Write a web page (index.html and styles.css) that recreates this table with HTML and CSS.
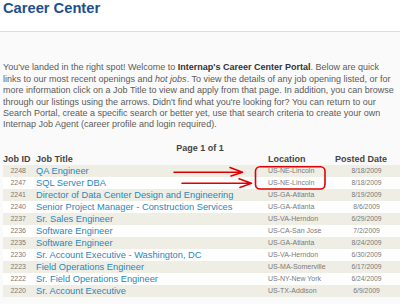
FILE: index.html
```html
<!DOCTYPE html>
<html lang="en">
<head>
<meta charset="utf-8">
<title>Career Center</title>
<link rel="stylesheet" href="styles.css">
</head>
<body>
<div class="page">
  <header class="top">
    <h1 class="title">Career Center</h1>
  </header>
  <main class="content">
    <p class="intro">You've landed in the right spot! Welcome to <b>Internap's Career Center Portal</b>. Below are quick<br>links to our most recent openings and <i>hot jobs</i>. To view the details of any job opening listed, or for<br>more information click on a Job Title to view and apply from that page. In addition, you can browse<br>through our listings using the arrows. Didn't find what you're looking for? You can return to our<br>Search Portal, create a specific search or better yet, use that search criteria to create your own<br>Internap Job Agent (career profile and login required).</p>
    <div class="pager">Page 1 of 1</div>
    <div class="jobs">
      <div class="row head"><span class="id">Job ID</span><span class="job">Job Title</span><span class="loc">Location</span><span class="date">Posted Date</span></div>
      <div class="row"><span class="id">2248</span><span class="job">QA Engineer</span><span class="loc">US-NE-Lincoln</span><span class="date">8/18/2009</span></div>
      <div class="row"><span class="id">2247</span><span class="job">SQL Server DBA</span><span class="loc">US-NE-Lincoln</span><span class="date">8/18/2009</span></div>
      <div class="row"><span class="id">2241</span><span class="job">Director of Data Center Design and Engineering</span><span class="loc">US-GA-Atlanta</span><span class="date">8/19/2009</span></div>
      <div class="row"><span class="id">2240</span><span class="job">Senior Project Manager - Construction Services</span><span class="loc">US-GA-Atlanta</span><span class="date">8/6/2009</span></div>
      <div class="row"><span class="id">2237</span><span class="job">Sr. Sales Engineer</span><span class="loc">US-VA-Herndon</span><span class="date">6/29/2009</span></div>
      <div class="row"><span class="id">2236</span><span class="job">Software Engineer</span><span class="loc">US-CA-San Jose</span><span class="date">7/2/2009</span></div>
      <div class="row"><span class="id">2235</span><span class="job">Software Engineer</span><span class="loc">US-GA-Atlanta</span><span class="date">8/24/2009</span></div>
      <div class="row"><span class="id">2230</span><span class="job">Sr. Account Executive - Washington, DC</span><span class="loc">US-VA-Herndon</span><span class="date">6/30/2009</span></div>
      <div class="row"><span class="id">2223</span><span class="job">Field Operations Engineer</span><span class="loc">US-MA-Somerville</span><span class="date">6/17/2009</span></div>
      <div class="row"><span class="id">2222</span><span class="job">Sr. Field Operations Engineer</span><span class="loc">US-NY-New York</span><span class="date">6/24/2009</span></div>
      <div class="row"><span class="id">2220</span><span class="job">Sr. Account Executive</span><span class="loc">US-TX-Addison</span><span class="date">6/9/2009</span></div>
    </div>
  </main>
  <svg class="marks" width="400" height="304" viewBox="0 0 400 304" aria-hidden="true">
    <g fill="none" stroke="#e00000" stroke-width="1.6" stroke-linecap="round" stroke-linejoin="round">
      <path d="M174 172.3 L242 172.3 M230 167.5 L242.5 172.3 L231 176"/>
      <path d="M182 183.3 L251 183.3 M239 178.8 L251.5 183.3 L240 187.5"/>
      <rect x="255.5" y="166.8" width="69.5" height="22.2" rx="4.5"/>
    </g>
  </svg>
</div>
</body>
</html>
```
FILE: styles.css
```css
html, body {
  margin: 0;
  padding: 0;
}
body {
  background: #fafafa;
  font-family: "Liberation Sans", Arial, sans-serif;
  overflow: hidden;
}
.page {
  position: relative;
  width: 400px;
  height: 304px;
  overflow: hidden;
}
.top {
  background: #ffffff;
  height: 31px;
  border-bottom: 1px solid #dcdcdc;
  padding-left: 3px;
}
.title {
  margin: 0;
  font-size: 14.7px;
  line-height: 17px;
  font-weight: bold;
  color: #1d4f8e;
}
.content {
  padding-left: 3px;
}
.intro {
  margin: 30.4px 0 0 0;
  font-size: 9px;
  line-height: 11.4px;
  color: #5a5a5a;
  white-space: nowrap;
}
.intro b {
  color: #333333;
}
.pager {
  margin-top: 11.2px;
  height: 11px;
  line-height: 12px;
  font-size: 9px;
  font-weight: bold;
  color: #444444;
  text-align: center;
  width: 394px;
}
.jobs {
  width: 410px;
}
.row {
  display: grid;
  grid-template-columns: 27px 232px 68px 73px;
  height: 12px;
  line-height: 12px;
  white-space: nowrap;
  background: #ffffff;
}
.row:nth-child(even) {
  background: #efeee5;
}
.row.head {
  background: transparent;
  font-size: 9px;
  font-weight: bold;
  color: #444444;
}
.id {
  font-size: 7px;
  color: #7a7a7a;
  text-align: right;
  padding-right: 4px;
}
.job {
  font-size: 9.3px;
  color: #2a86bc;
  padding-left: 6px;
}
.loc {
  font-size: 7px;
  color: #7a7a7a;
  padding-left: 6px;
}
.date {
  font-size: 6.8px;
  color: #7a7a7a;
  text-align: center;
}
.head .id, .head .job, .head .loc, .head .date {
  font-size: 9px;
  color: #444444;
}
.head .id {
  text-align: left;
  padding-right: 0;
}
.head .date {
  text-align: left;
  padding-left: 5px;
}
.marks {
  position: absolute;
  left: 0;
  top: 0;
  pointer-events: none;
}
```
